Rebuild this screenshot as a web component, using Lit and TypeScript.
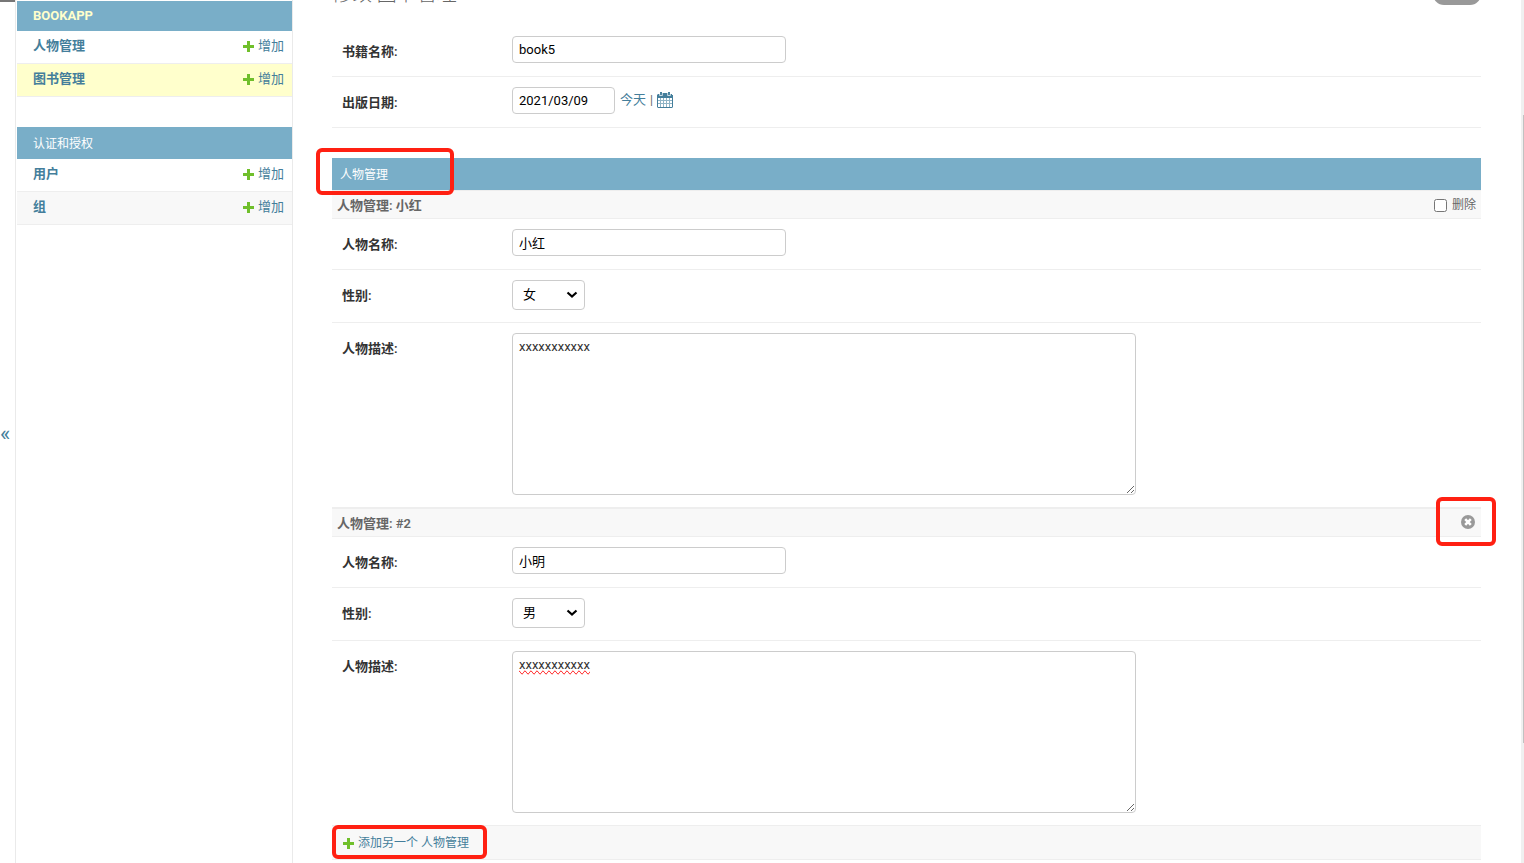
import { LitElement, html, css } from "lit";
import { customElement, property } from "lit/decorators.js";

const base = css`
  * { box-sizing: border-box; }
  a { color: #447e9b; text-decoration: none; }
  h1, h2, h3 { margin: 0; }
`;

const plus = html`<svg width="11" height="11" viewBox="0 0 11 11" aria-hidden="true">
  <path fill="#70bf2b" d="M4 0h3v4h4v3H7v4H4V7H0V4h4z" />
</svg>`;

@customElement("nav-module")
class NavModule extends LitElement {
  @property() caption = "";
  @property({ type: Boolean }) plain = false;
  @property({ attribute: false }) items: { name: string; state?: string }[] = [];

  static styles = [base, css`
    :host { display: block; }
    .caption {
      padding: 7px 16px;
      background: #79aec8;
      font-size: 13px;
      line-height: 16px;
      font-weight: 700;
    }
    .caption a { color: #ffc; }
    .caption.plain { padding: 9px 16px 7px; font-size: 12px; font-weight: 400; }
    .caption.plain a { color: #fff; }
    table { width: 100%; border-collapse: separate; border-spacing: 0; }
    th, td {
      padding: 7px 8px 9px;
      border-bottom: 1px solid #eee;
      line-height: 16px;
      font-size: 13px;
      text-align: left;
    }
    th { padding-left: 16px; font-weight: 600; }
    .add { display: flex; justify-content: flex-end; align-items: center; gap: 4px; }
    .current { background: #ffc; }
    .even { background: #f8f8f8; }
  `];

  render() {
    return html`
      <h2 class="caption ${this.plain ? "plain" : ""}"><a href="#">${this.caption}</a></h2>
      <table>
        ${this.items.map((i) => html`
          <tr class=${i.state ?? ""}>
            <th scope="row"><a href="#">${i.name}</a></th>
            <td><a class="add" href="#">${plus}增加</a></td>
          </tr>`)}
      </table>`;
  }
}

@customElement("person-inline")
class PersonInline extends LitElement {
  @property() heading = "";
  @property() name = "";
  @property() gender = "";
  @property() description = "";
  @property({ type: Boolean }) fresh = false;

  static styles = [base, css`
    :host { display: block; }
    .heading {
      display: flex;
      justify-content: space-between;
      align-items: center;
      padding: 2px 5px 0;
      border: solid #eee;
      border-width: 1px 0;
      background: #f8f8f8;
      color: #666;
      font-size: 13px;
      line-height: 25px;
      font-weight: 600;
    }
    .delete { display: flex; align-items: center; gap: 5px; font-size: 12px; font-weight: 400; }
    .delete input { width: 13px; height: 13px; margin: 0; }
    .remove {
      position: relative;
      display: flex;
      align-self: flex-start;
      margin: 4px 1px 0;
      padding: 0;
      border: 0;
      background: none;
    }
    .mark {
      position: absolute;
      inset: -18px -21px -17px -25px;
      border: 4px solid #ff2012;
      border-radius: 6px;
    }
  `];

  render() {
    return html`
      <h3 class="heading">
        <span>人物管理: ${this.heading}</span>
        ${this.fresh
          ? html`<button class="remove" type="button" aria-label="删除">
              <svg width="14" height="14" viewBox="0 0 14 14" aria-hidden="true">
                <circle cx="7" cy="7" r="7" fill="#999" />
                <path d="M4.200 4.200l5.600 5.600M9.800 4.200l-5.600 5.600" stroke="#fff" stroke-width="2.600" />
              </svg>
              <span class="mark"></span>
            </button>`
          : html`<label class="delete"><input type="checkbox" />删除</label>`}
      </h3>
      <form-row label="人物名称:" kind="text" .value=${this.name}></form-row>
      <form-row label="性别:" kind="select" .value=${this.gender}></form-row>
      <form-row label="人物描述:" kind="area" .value=${this.description} ?flagged=${this.fresh}></form-row>`;
  }
}

@customElement("form-row")
class FormRow extends LitElement {
  @property() label = "";
  @property() kind = "text";
  @property() value = "";
  @property({ type: Boolean }) flagged = false;

  static styles = [base, css`
    :host { display: block; }
    .row {
      display: grid;
      grid-template-columns: 170px minmax(0, 1fr);
      align-items: start;
      padding: 10px 10px 12px;
      border-bottom: 1px solid #eee;
    }
    .label { padding-top: 8px; color: #333; font-size: 13px; line-height: 16px; font-weight: 600; }
    .field { display: flex; align-items: flex-start; min-height: 28px; }
    input, select, textarea {
      margin: 0;
      border: 1px solid #ccc;
      border-radius: 4px;
      background: #fff;
      color: #000;
      font-family: inherit;
      font-size: 13px;
    }
    input { width: 274px; height: 27px; padding: 5px 6px; }
    .date { width: 103px; }
    select {
      appearance: none;
      width: 73px;
      height: 30px;
      padding: 4px 10px 6px;
      background: #fff url("data:image/svg+xml,%3Csvg xmlns='http://www.w3.org/2000/svg' width='12' height='8'%3E%3Cpath d='M1.500 1.500L6 5.500l4.500-4' fill='none' stroke='%23000' stroke-width='2.200'/%3E%3C/svg%3E") no-repeat right 6px center;
    }
    textarea { width: 624px; max-width: 100%; height: 162px; padding: 5px 6px; line-height: 16px; color: #333; }
    .flagged { text-decoration-line: spelling-error; }
    .shortcuts {
      display: flex;
      align-items: center;
      gap: 4px;
      padding: 5px;
      color: #666;
      font-size: 13px;
      line-height: 16px;
    }
    .bar { font-size: 12px; }
    .calendar { display: flex; }
  `];

  control() {
    if (this.kind === "select") {
      return html`<select id="f">
        ${["男", "女"].map((o) => html`<option ?selected=${o === this.value}>${o}</option>`)}
      </select>`;
    }
    if (this.kind === "area") {
      return html`<textarea id="f" class=${this.flagged ? "flagged" : ""} spellcheck="false" .value=${this.value}></textarea>`;
    }
    if (this.kind === "date") {
      return html`<input id="f" class="date" type="text" .value=${this.value} />
        <span class="shortcuts">
          <a href="#">今天</a><span class="bar">|</span>
          <a class="calendar" href="#" aria-label="选择日期">
            <svg width="16" height="16" viewBox="0 0 16 16" aria-hidden="true">
              <path fill="#447e9b" d="M3 0h2v1h6V0h2v2h2v1h1v12l-1 1H1l-1-1V3l1-1h2z" />
              <path fill="#fff" d="M1 6h14v9H1z" />
              <path fill="none" stroke="#fff" stroke-width="0.700" d="M2.600 1v2.500h2.800V1M10.600 1v2.500h2.800V1" />
              <path fill="none" stroke="#8fb4c6" d="M3.500 6v9M6.500 6v9M9.500 6v9M12.500 6v9M1 8.500h14M1 11.500h14" />
            </svg>
          </a>
        </span>`;
    }
    return html`<input id="f" type="text" .value=${this.value} />`;
  }

  render() {
    return html`<div class="row">
      <label class="label" for="f">${this.label}</label>
      <div class="field">${this.control()}</div>
    </div>`;
  }
}

@customElement("app-root")
class AppRoot extends LitElement {
  static styles = [base, css`
    :host {
      display: flex;
      height: 100vh;
      overflow: hidden;
      background: #fff;
      color: #333;
      font-family: Roboto, "Noto Sans CJK SC", sans-serif;
      font-size: 13px;
    }
    .toggle {
      flex: none;
      width: 16px;
      padding: 4px 0 0;
      border: solid #eaeaea;
      border-width: 0 1px 0 0;
      background: linear-gradient(#777 2px, #fff 2px);
      color: #447e9b;
      font-family: inherit;
      font-size: 22px;
      text-align: left;
    }
    .sidebar {
      display: flex;
      flex-direction: column;
      gap: 30px;
      flex: none;
      width: 277px;
      padding: 1px 0 0 1px;
      border-right: 1px solid #eaeaea;
    }
    .main { flex: 1; min-width: 0; padding: 0 40px 0 39px; }
    .title {
      display: flex;
      justify-content: space-between;
      align-items: center;
      margin: -18px 0 20px;
    }
    .title h1 { color: #666; font-size: 20px; line-height: 24px; font-weight: 300; }
    .history {
      padding: 3px 12px;
      border-radius: 15px;
      background: #999;
      color: #fff;
      font-size: 12px;
      line-height: 16px;
    }
    .group { margin-top: 30px; }
    .group-title {
      position: relative;
      padding: 9px 8px 7px;
      background: #79aec8;
      color: #fff;
      font-size: 12px;
      line-height: 16px;
      font-weight: 400;
    }
    .mark { position: absolute; border: 4px solid #ff2012; border-radius: 6px; pointer-events: none; }
    .mark-title { left: -16px; top: -10px; width: 138px; height: 47px; }
    .mark-add { left: 0; top: -1px; width: 155px; height: 34px; }
    .add-row {
      position: relative;
      display: flex;
      padding: 9px 11px 8px;
      border-bottom: 1px solid #eee;
      background: #f8f8f8;
      font-size: 12px;
      line-height: 16px;
    }
    .add { display: flex; align-items: center; gap: 4px; }
    .scroll { flex: none; width: 3px; padding: 115px 0 120px 2px; background: #f0f0f0; }
    .thumb { height: 100%; background: #c1c1c1; }
  `];

  render() {
    return html`
      <button class="toggle" type="button" aria-label="切换导航">«</button>
      <nav class="sidebar">
        <nav-module caption="BOOKAPP" .items=${[{ name: "人物管理" }, { name: "图书管理", state: "current" }]}></nav-module>
        <nav-module plain caption="认证和授权" .items=${[{ name: "用户" }, { name: "组", state: "even" }]}></nav-module>
      </nav>
      <main class="main">
        <div class="title">
          <h1>修改 图书管理</h1>
          <a class="history" href="#">历史</a>
        </div>
        <form-row label="书籍名称:" value="book5"></form-row>
        <form-row label="出版日期:" kind="date" value="2021/03/09"></form-row>
        <section class="group">
          <h2 class="group-title">人物管理<span class="mark mark-title"></span></h2>
          <person-inline heading="小红" name="小红" gender="女" description="xxxxxxxxxxx"></person-inline>
          <person-inline heading="#2" name="小明" gender="男" description="xxxxxxxxxxx" fresh></person-inline>
          <div class="add-row">
            <a class="add" href="#">${plus}添加另一个 人物管理</a>
            <span class="mark mark-add"></span>
          </div>
        </section>
      </main>
      <div class="scroll"><div class="thumb"></div></div>`;
  }
}
